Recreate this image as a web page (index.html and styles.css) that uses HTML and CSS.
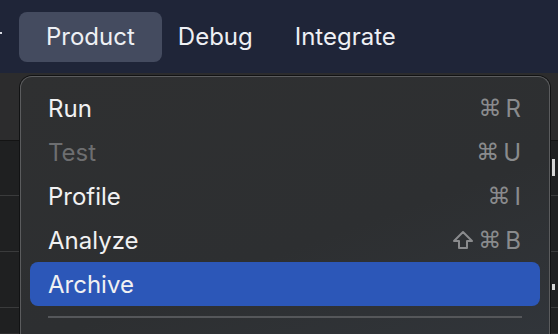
FILE: index.html
```html
<!DOCTYPE html>
<html lang="en">
<head>
<meta charset="UTF-8">
<meta name="viewport" content="width=device-width, initial-scale=1.0">
<title>Product Menu</title>
<link rel="stylesheet" href="styles.css">
</head>
<body>
    <div class="menubar">
        <span class="edgeMark"></span>
        <div class="barItem active">Product</div>
        <div class="barItem">Debug</div>
        <div class="barItem">Integrate</div>
    </div>

    <div class="workspace">
        <div class="toolbarArea"></div>
        <div class="listArea">
            <div class="listRow"></div>
            <div class="listRow"></div>
            <div class="listRow"></div>
            <div class="listRow"></div>
        </div>
        <span class="sideMark one"></span>
        <span class="sideMark two"></span>
    </div>

    <div class="dropMenu">
        <div class="menuRow">
            <span class="label">Run</span>
            <span class="keys"><span class="cmd">⌘</span>R</span>
        </div>
        <div class="menuRow disabled">
            <span class="label">Test</span>
            <span class="keys"><span class="cmd">⌘</span>U</span>
        </div>
        <div class="menuRow">
            <span class="label">Profile</span>
            <span class="keys"><span class="cmd">⌘</span>I</span>
        </div>
        <div class="menuRow">
            <span class="label">Analyze</span>
            <span class="keys">
                <svg class="shift" width="22" height="20" viewBox="0 0 22 20"><path d="M11 2 L20 11 L15 11 L15 18 L7 18 L7 11 L2 11 Z" fill="none" stroke="#8a8b8d" stroke-width="2" stroke-linejoin="round"/></svg><span class="cmd">⌘</span>B
            </span>
        </div>
        <div class="menuRow selected">
            <span class="label">Archive</span>
            <span class="keys"></span>
        </div>
        <div class="separator"></div>
    </div>
</body>
</html>
```

FILE: styles.css
```css
  body {
    margin: 0;
    width: 558px;
    height: 334px;
    overflow: hidden;
    background-color: #2c2c2d;
    font-family: Inter, "Noto Sans", sans-serif;
    position: relative;
  }
  .menubar{
    height: 73px;
    background-color: #1f2538;
    display: flex;
    align-items: center;
    padding-left: 19px;
    position: relative;
  }
  .edgeMark{
    position: absolute;
    left: 0;
    top: 32px;
    width: 2px;
    height: 2px;
    background-color: #d8dbe3;
  }
  .barItem{
    color: #eef0f4;
    font-size: 24px;
    padding: 0 21px;
    height: 50px;
    line-height: 50px;
    margin-top: 1px;
  }
  .barItem.active{
    padding: 0 27px;
    margin-right: -5px;
    background-color: #444b5f;
    border-radius: 8px;
  }
  .workspace{
    height: 261px;
    position: relative;
  }
  .toolbarArea{
    height: 67px;
    background-color: #2c2c2d;
  }
  .listArea{
    border-top: 1px solid #141414;
    background-color: #1f2021;
    height: 193px;
    padding-top: 54px;
    box-sizing: border-box;
  }
  .listRow{
    height: 56px;
    border-top: 1px solid #3a3b3c;
    box-sizing: border-box;
  }
  .sideMark{
    position: absolute;
    left: 552px;
    width: 3px;
    background-color: #d6d6d6;
  }
  .sideMark.one{
    top: 86px;
    height: 17px;
  }
  .sideMark.two{
    top: 211px;
    height: 6px;
  }
  .dropMenu{
    position: absolute;
    left: 20px;
    top: 76px;
    width: 530px;
    height: 258px;
    box-sizing: border-box;
    border: 1px solid #5b5c5e;
    border-bottom: none;
    border-radius: 12px 12px 0 0;
    box-shadow: 0 0 0 1px #111213;
    background: linear-gradient(160deg, #2f3031 0%, #2d2f31 60%, #31353a 100%);
    padding: 9px 9px 0 9px;
  }
  .menuRow{
    height: 44px;
    display: flex;
    align-items: center;
    justify-content: space-between;
    padding: 0 19px 0 18px;
    border-radius: 8px;
  }
  .label{
    color: #f1f1f2;
    font-size: 24px;
  }
  .keys{
    color: #8a8b8d;
    font-size: 24px;
    display: flex;
    align-items: center;
  }
  .cmd{
    font-family: "DejaVu Sans", sans-serif;
    font-size: 23px;
    margin-right: 4px;
  }
  .shift{
    margin-right: 4px;
  }
  .menuRow.disabled .label{
    color: #6d6e70;
  }
  .menuRow.selected{
    background-color: #2c57b8;
  }
  .separator{
    height: 2px;
    background-color: #55575a;
    margin: 10px 18px 0 18px;
  }
```
